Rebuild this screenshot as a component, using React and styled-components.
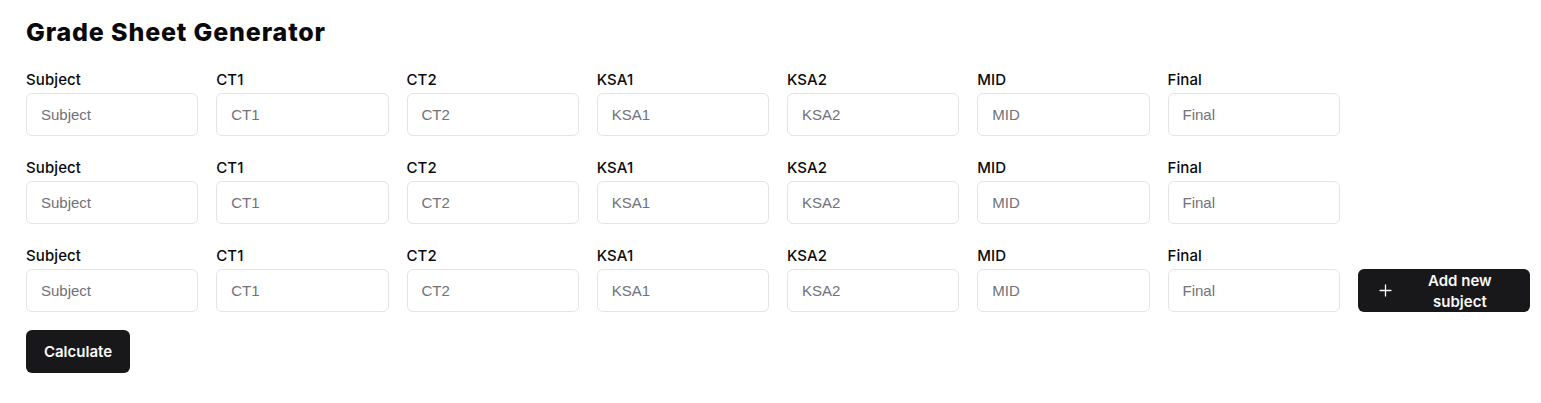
import React from 'react';
import styled, { createGlobalStyle } from 'styled-components';

const fields = ['Subject', 'CT1', 'CT2', 'KSA1', 'KSA2', 'MID', 'Final'];
const rows = [0, 1, 2];

const GlobalStyle = createGlobalStyle`
  body {
    margin: 0;
    background: #ffffff;
    font-family: Inter, 'Liberation Sans', sans-serif;
    color: #09090b;
  }
`;

const Page = styled.div`
  width: 1504px;
  padding: 16px 0 30px 26px;
`;

const Title = styled.h1`
  margin: 0 0 22px;
  font-size: 25px;
  line-height: 32px;
  font-weight: 800;
  letter-spacing: 0.85px;
`;

const Rows = styled.div`
  display: flex;
  flex-direction: column;
  gap: 22px;
`;

const Row = styled.div`
  display: grid;
  grid-template-columns: repeat(8, 1fr);
  column-gap: 18px;
  align-items: end;
`;

const Field = styled.label`
  display: flex;
  flex-direction: column;
  gap: 3px;
`;

const Label = styled.span`
  font-size: 15px;
  line-height: 20px;
  font-weight: 500;
  letter-spacing: 0.1px;
`;

const Input = styled.input`
  box-sizing: border-box;
  height: 43px;
  width: 100%;
  padding: 0 14px;
  border: 1px solid #e4e4e7;
  border-radius: 6px;
  font-family: 'Liberation Sans', Arial, sans-serif;
  font-size: 15px;
  color: #09090b;
  outline: none;

  &::placeholder {
    color: #71717a;
  }
`;

const DarkButton = styled.button`
  box-sizing: border-box;
  height: 43px;
  border: none;
  border-radius: 6px;
  background: #18181b;
  color: #fafafa;
  font-family: Inter, 'Liberation Sans', sans-serif;
  font-size: 15px;
  font-weight: 600;
  line-height: 21px;
  cursor: pointer;
`;

const AddButton = styled(DarkButton)`
  display: flex;
  align-items: center;
  width: 100%;
  padding: 0 16px 0 21px;
`;

const AddText = styled.span`
  flex: 1;
  padding: 0 14px 0 28px;
  text-align: center;
`;

const CalcButton = styled(DarkButton)`
  margin-top: 18px;
  width: 104px;
  padding: 0;
`;

const Plus = () => (
  <svg width="13" height="13" viewBox="0 0 13 13" fill="none" stroke="#fafafa" strokeWidth="1.3" strokeLinecap="round">
    <path d="M6.5 1v11M1 6.5h11" />
  </svg>
);

export default function App() {
  return (
    <Page>
      <GlobalStyle />
      <Title>Grade Sheet Generator</Title>
      <Rows>
        {rows.map((r) => (
          <Row key={r}>
            {fields.map((f) => (
              <Field key={f}>
                <Label>{f}</Label>
                <Input placeholder={f} />
              </Field>
            ))}
            {r === rows.length - 1 && (
              <AddButton>
                <Plus />
                <AddText>Add new subject</AddText>
              </AddButton>
            )}
          </Row>
        ))}
      </Rows>
      <CalcButton>Calculate</CalcButton>
    </Page>
  );
}
